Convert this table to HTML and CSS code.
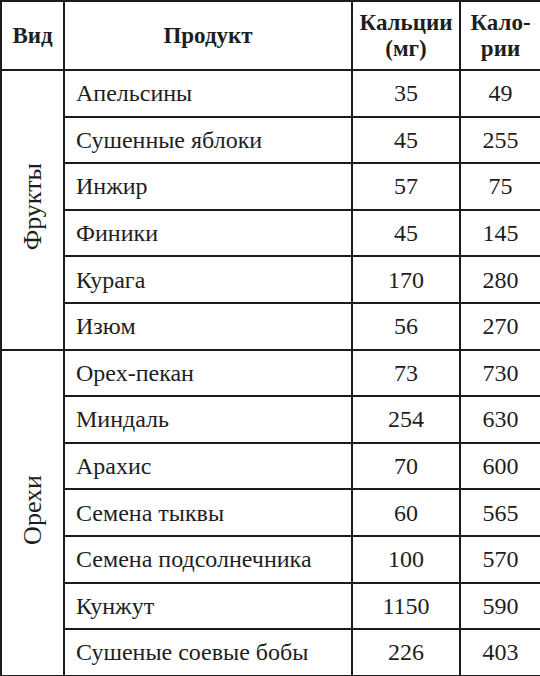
FILE: index.html
```html
<!DOCTYPE html>
<html lang="ru">
<head>
<meta charset="utf-8">
<link rel="stylesheet" href="styles.css">
</head>
<body>
<table class="tbl">
  <colgroup>
    <col class="c-kind"><col class="c-prod"><col class="c-ca"><col class="c-kcal">
  </colgroup>
  <thead>
    <tr class="head">
      <th>Вид</th>
      <th>Продукт</th>
      <th>Кальции<br>(мг)</th>
      <th>Кало-<br>рии</th>
    </tr>
  </thead>
  <tbody>
    <tr><td class="kind" rowspan="6"><span class="vert">Фрукты</span></td><td class="name">Апельсины</td><td class="num">35</td><td class="num">49</td></tr>
    <tr><td class="name">Сушенные яблоки</td><td class="num">45</td><td class="num">255</td></tr>
    <tr><td class="name">Инжир</td><td class="num">57</td><td class="num">75</td></tr>
    <tr><td class="name">Финики</td><td class="num">45</td><td class="num">145</td></tr>
    <tr><td class="name">Курага</td><td class="num">170</td><td class="num">280</td></tr>
    <tr><td class="name">Изюм</td><td class="num">56</td><td class="num">270</td></tr>
    <tr><td class="kind" rowspan="7"><span class="vert">Орехи</span></td><td class="name">Орех-пекан</td><td class="num">73</td><td class="num">730</td></tr>
    <tr><td class="name">Миндаль</td><td class="num">254</td><td class="num">630</td></tr>
    <tr><td class="name">Арахис</td><td class="num">70</td><td class="num">600</td></tr>
    <tr><td class="name">Семена тыквы</td><td class="num">60</td><td class="num">565</td></tr>
    <tr><td class="name">Семена подсолнечника</td><td class="num">100</td><td class="num">570</td></tr>
    <tr><td class="name">Кунжут</td><td class="num">1150</td><td class="num">590</td></tr>
    <tr><td class="name">Сушеные соевые бобы</td><td class="num">226</td><td class="num">403</td></tr>
  </tbody>
</table>
</body>
</html>
```
FILE: styles.css
```css
html, body {
  margin: 0;
  padding: 0;
  background: #ffffff;
}
.tbl {
  border-collapse: collapse;
  table-layout: fixed;
  width: 540px;
  font-family: "Liberation Serif", "DejaVu Serif", serif;
  font-size: 24px;
  color: #1e1e1e;
}
.c-kind { width: 63px; }
.c-prod { width: 288px; }
.c-ca { width: 108px; }
.c-kcal { width: 81px; }
.tbl th, .tbl td {
  border: 2px solid #1c1c1c;
  padding: 0;
  vertical-align: middle;
}
.head th {
  height: 67px;
  font-weight: bold;
  text-align: center;
  line-height: 26px;
  font-size: 23px;
}
.tbl tbody td {
  height: 44.6px;
  line-height: 28px;
}
.tbl td.name {
  text-align: left;
  padding-left: 11px;
}
.num {
  text-align: center;
}
.kind {
  text-align: center;
}
.vert {
  display: inline-block;
  writing-mode: vertical-rl;
  transform: rotate(180deg);
  font-size: 26px;
  line-height: 30px;
}
```
